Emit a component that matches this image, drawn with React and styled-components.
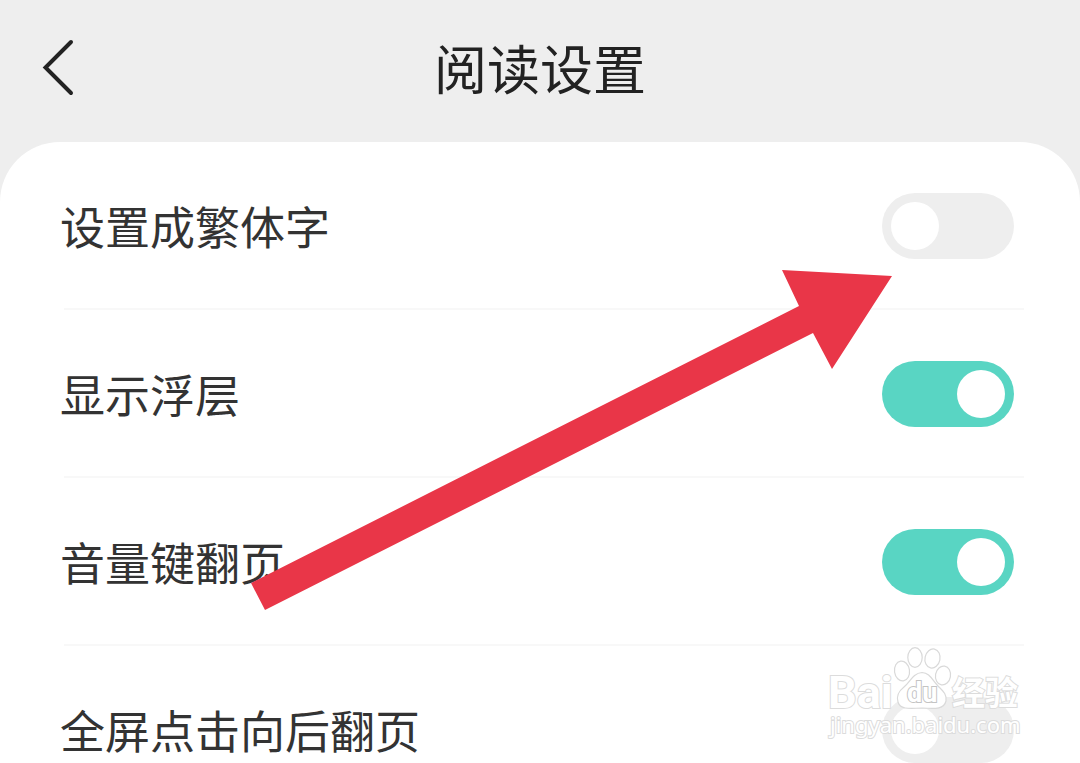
import styled, { createGlobalStyle } from 'styled-components';

const settings = [
    { id: 'traditional', label: '设置成繁体字', on: false },
    { id: 'overlay', label: '显示浮层', on: true },
    { id: 'volumeKey', label: '音量键翻页', on: true },
    { id: 'tapNext', label: '全屏点击向后翻页', on: false },
];

const App = () => {
    return (
        <Page>
            <GlobalStyle />
            <Header>
                <BackButton type="button" aria-label="返回">
                    <svg width="36" height="60" viewBox="0 0 36 60" fill="none">
                        <path d="M31 5L5.500 30.500L31 56" stroke="#222222" strokeWidth="4" strokeLinecap="round" />
                    </svg>
                </BackButton>
                <Title>阅读设置</Title>
            </Header>
            <Panel>
                {settings.map((item) => (
                    <Row key={item.id}>
                        <Label htmlFor={item.id}>{item.label}</Label>
                        <Switch type="checkbox" role="switch" id={item.id} defaultChecked={item.on} />
                    </Row>
                ))}
            </Panel>
            <Arrow viewBox="0 0 642 341" aria-hidden="true">
                <polygon points="531,0 641,6 581,99 562,63 14,340 0,313 548,36" fill="#e93648" />
            </Arrow>
            <Watermark />
        </Page>
    );
};

const Watermark = () => (
    <Mark viewBox="0 0 210 100">
        <g fill="#ffffff" stroke="#d9d9d9" strokeWidth="1.200">
            <ellipse cx="78" cy="26" rx="7.500" ry="10" transform="rotate(-8 78 26)" />
            <ellipse cx="91" cy="12.500" rx="7.200" ry="9.800" />
            <ellipse cx="108.500" cy="13.500" rx="7.500" ry="9.600" transform="rotate(12 108.500 13.500)" />
            <ellipse cx="119" cy="30.500" rx="7.500" ry="9.500" transform="rotate(10 119 30.500)" />
            <path d="M98 27.500C89 28 86 37 80 42C75 46 72 50 74 57C76 64 83 64 98 63C113 64 120 64 122 56C123 49 119 46 114 41C108 35 106 28 98 27.500Z" />
        </g>
        <MarkText x="4" y="63" $size={45} $bold>Bai</MarkText>
        <MarkText x="83" y="57" $size={27} $bold $line="#c4c4c4">du</MarkText>
        <MarkText x="128" y="60" $size={33} $bold>经验</MarkText>
        <MarkText x="6" y="88" $size={22}>jingyan.baidu.com</MarkText>
    </Mark>
);

const GlobalStyle = createGlobalStyle`
    html {
        scrollbar-width: none;
    }

    body {
        margin: 0;
        background-color: #eeeeee;
        font-family: "Noto Sans CJK SC", sans-serif;
    }
`;

const Page = styled.main`
    position: relative;
    min-height: 100vh;
    overflow: hidden;
`;

const Header = styled.header`
    display: grid;
    grid-template-columns: 72px 1fr 72px;
    align-items: center;
    height: 142px;
    padding: 0 40px 8px;
    box-sizing: border-box;
`;

const BackButton = styled.button`
    display: flex;
    padding: 0;
    border: none;
    background: none;
    cursor: pointer;
`;

const Title = styled.h1`
    margin: 0;
    text-align: center;
    font-size: 53px;
    font-weight: 400;
    line-height: 80px;
    color: #222222;
`;

const Panel = styled.section`
    border-radius: 60px 60px 0 0;
    background-color: #ffffff;
`;

const Row = styled.div`
    display: flex;
    justify-content: space-between;
    align-items: center;
    height: 168px;
    padding: 0 66px 0 60px;
    background: linear-gradient(#f8f8f8, #f8f8f8) 64px 100% / calc(100% - 120px) 2px no-repeat;
    box-sizing: border-box;
`;

const Label = styled.label`
    font-size: 45px;
    line-height: 64px;
    color: #333333;
`;

const Switch = styled.input`
    display: flex;
    align-items: center;
    width: 132px;
    height: 66px;
    margin: 0;
    padding: 0 9px;
    border-radius: 33px;
    background-color: #eeeeee;
    box-sizing: border-box;
    appearance: none;
    cursor: pointer;

    &::before {
        content: '';
        width: 48px;
        height: 48px;
        border-radius: 50%;
        background-color: #ffffff;
    }

    &:checked {
        justify-content: flex-end;
        background-color: #59d5c3;
    }
`;

const Arrow = styled.svg`
    position: absolute;
    top: 270px;
    left: 251px;
    width: 642px;
    height: 341px;
    pointer-events: none;
`;

const Mark = styled.svg`
    position: absolute;
    top: 645px;
    right: 46px;
    width: 210px;
    height: 100px;
    pointer-events: none;
`;

const MarkText = styled.text`
    font-family: ${({ $bold }) => ($bold ? 'Roboto, "Noto Sans CJK SC"' : '"Noto Sans"')}, sans-serif;
    font-size: ${({ $size }) => $size}px;
    font-weight: ${({ $bold }) => ($bold ? 700 : 400)};
    fill: #ffffff;
    stroke: ${({ $line }) => $line || '#dcdcdc'};
    stroke-width: 2px;
    paint-order: stroke;
`;

export default App;
